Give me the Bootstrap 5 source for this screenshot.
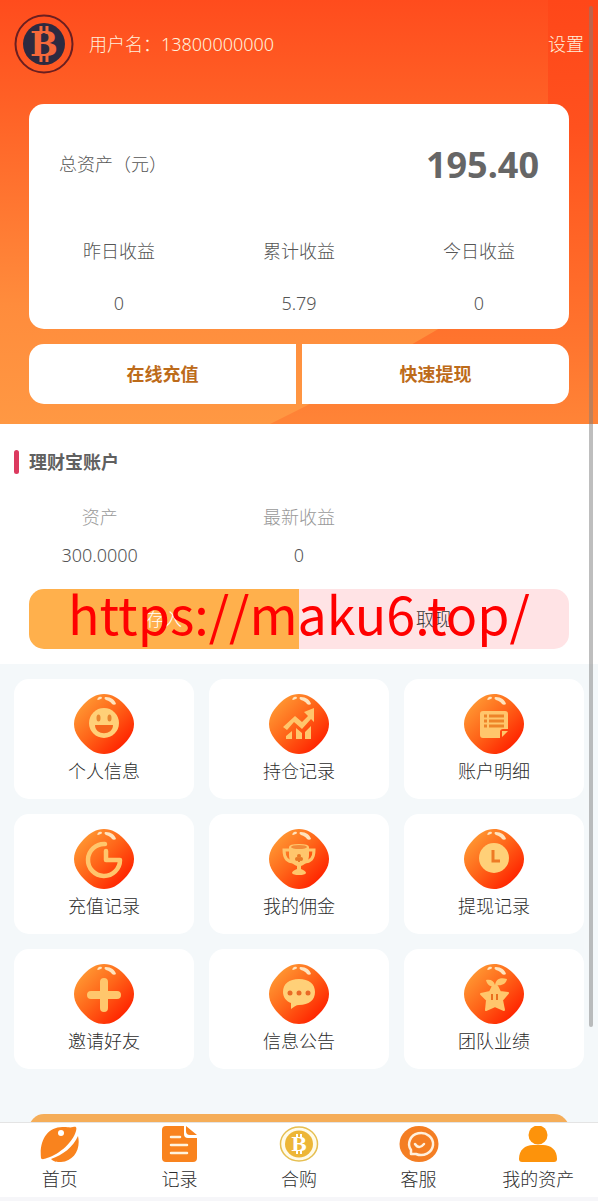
<!DOCTYPE html>
<html lang="zh-CN">
<head>
<meta charset="utf-8">
<meta name="viewport" content="width=device-width, initial-scale=1">
<title>我的资产</title>
<link href="https://cdn.jsdelivr.net/npm/bootstrap@5.3.0/dist/css/bootstrap.min.css" rel="stylesheet">
<style>
  body { font: 300 18px/27px "Noto Sans", "Noto Sans CJK SC", sans-serif; color: #2c2c2c; background: #f4f8fa; }
  a { color: inherit; text-decoration: none; }
  .scroll-area { overflow-y: auto; scrollbar-width: none; min-height: 0; }
  .scroll-area::-webkit-scrollbar { display: none; }
  .scroll-thumb { position: absolute; top: 6px; right: 5px; width: 4px; height: 85%; border-radius: 2px; background: rgba(125, 125, 125, .5); z-index: 5; }
  .hero { position: relative; padding: 14px 29px 20px; background: linear-gradient(#ff4c1d, #ff6126 25%, #ff8c3c 72%, #ff9843); }
  .hero-facets { position: absolute; inset: 0; width: 100%; height: 100%; }
  .profile { margin: 0 -15px 30px; gap: 15px; color: #fff0dc; }
  .avatar { width: 60px; height: 60px; }
  .panel { border-radius: 15px; background: #fff; color: #555; }
  .total-row { height: 121px; padding: 0 30px; }
  .total-sum { font-size: 36px; font-weight: 700; color: #666; }
  .figure-line { line-height: 52px; }
  .pair { gap: 6px; margin-top: 15px; }
  .pair .btn, .transfer .btn { height: 60px; border: 0; border-radius: 0; padding: 0; font-size: 18px; flex: 1 1 0; }
  .pair .btn { background: #fff; color: #bd6b1a; font-weight: 700; }
  .pair .btn:first-child, .transfer .btn-in { border-radius: 15px 0 0 15px; }
  .pair .btn:last-child, .transfer .btn-out { border-radius: 0 15px 15px 0; }
  .account { background: #fff; padding: 26px 0 15px; color: #555; }
  .account-title { font-size: 18px; line-height: 24px; font-weight: 700; margin: 0 14px 24px; gap: 10px; color: #606060; }
  .title-mark { width: 5px; height: 24px; border-radius: 3px; background: #dc3a5f; }
  .account-line { line-height: 38px; }
  .faint { color: #999; }
  .transfer { position: relative; margin: 15px 29px 0; }
  .transfer .btn { font-weight: 300; }
  .btn-in { background: #ffb04c; color: #fff; }
  .btn-out { background: #ffe3e5; color: #333; }
  .watermark { position: absolute; inset: 0; pointer-events: none; color: #f00; font: 400 52px/48px "Noto Sans CJK SC", sans-serif; }
  .tiles { padding: 15px 14px 45px; display: grid; grid-template-columns: repeat(3, 1fr); gap: 15px; }
  .tile { height: 120px; padding-top: 15px; border-radius: 15px; background: #fff; display: flex; flex-direction: column; align-items: center; gap: 4px; }
  .gem { width: 60px; height: 60px; }
  .logout-row { padding: 0 29px 30px; }
  .logout { height: 60px; border: 0; border-radius: 15px; background: #f5ad58; }
  .tabs { background: #fff; border-top: 1px solid #e4e4e4; border-bottom: 4px solid #f6f6f9; padding: 3px 0 4px; z-index: 6; }
  .tab { flex: 1 1 0; display: flex; flex-direction: column; align-items: center; gap: 4px; }
  .tab svg { width: 40px; height: 36px; }
</style>
</head>
<body>
<svg width="0" height="0" class="position-absolute" aria-hidden="true">
  <defs>
    <linearGradient id="gemFill" x1=".1" y1=".1" x2=".85" y2=".85"><stop offset="0" stop-color="#ff9c35"/><stop offset=".5" stop-color="#ff6519"/><stop offset="1" stop-color="#ff2400"/></linearGradient>
    <linearGradient id="facetFill" x1="0" y1="0" x2="0" y2="1"><stop offset="0" stop-color="#ff4719"/><stop offset=".3" stop-color="#ff511e"/><stop offset=".5" stop-color="#ff6024"/><stop offset=".8" stop-color="#ff742e"/><stop offset="1" stop-color="#ff8437"/></linearGradient>
    <symbol id="gem" viewBox="0 0 60 60">
      <path fill="url(#gemFill)" d="M30 0c8 0 14 4 19 9 5 5 11 12 11 21s-6 16-11 21c-5 5-11 9-19 9s-14-4-19-9C6 46 0 39 0 30S6 14 11 9 22 0 30 0z"/>
      <path fill="#ffe3bd" d="M32 3c5 0 9 3 10 7-1 1-3 1-4 0-1-2-3-3-6-4-2-1-2-3 0-3zM24 4c2-2 4-1 4 0s-2 1-4 2c-1 0-1-1 0-2z"/>
    </symbol>
  </defs>
</svg>

<div class="vh-100 d-flex flex-column position-relative overflow-hidden">
  <main class="scroll-area flex-fill">
    <section class="hero">
      <svg class="hero-facets" viewBox="0 0 598 424" preserveAspectRatio="none" aria-hidden="true"><path fill="url(#facetFill)" d="M548 0h50v424H270l36-18 134-78 108-224z"/></svg>
      <header class="profile d-flex align-items-center position-relative">
        <svg class="avatar" viewBox="0 0 60 60" role="img" aria-label="头像">
          <circle cx="30" cy="30" r="28.5" fill="none" stroke="#6b1f20" stroke-width="2"/>
          <circle cx="30" cy="30" r="21" fill="#2d2a40"/>
          <path d="M27 12v8m6-8v8m-6 20v8m6-8v8" stroke="#f5683a" stroke-width="3"/>
          <text x="30" y="42" text-anchor="middle" font-family="DejaVu Serif" font-weight="700" font-size="33" fill="#f5683a">B</text>
        </svg>
        <span>用户名：13800000000</span>
        <a href="#settings" class="ms-auto">设置</a>
      </header>
      <div class="panel position-relative">
        <div class="total-row d-flex align-items-center justify-content-between">
          <span>总资产（元）</span><span class="total-sum">195.40</span>
        </div>
        <div class="row g-0 text-center">
          <div class="col-4"><div class="figure-line">昨日收益</div><div class="figure-line">0</div></div>
          <div class="col-4"><div class="figure-line">累计收益</div><div class="figure-line">5.79</div></div>
          <div class="col-4"><div class="figure-line">今日收益</div><div class="figure-line">0</div></div>
        </div>
      </div>
      <div class="pair d-flex position-relative">
        <button type="button" class="btn">在线充值</button>
        <button type="button" class="btn">快速提现</button>
      </div>
    </section>

    <section class="account">
      <h2 class="account-title d-flex"><span class="title-mark"></span>理财宝账户</h2>
      <div class="row g-0 text-center">
        <div class="col-4"><div class="account-line faint">资产</div><div class="account-line">300.0000</div></div>
        <div class="col-4"><div class="account-line faint">最新收益</div><div class="account-line">0</div></div>
      </div>
      <div class="transfer d-flex">
        <button type="button" class="btn btn-in">存入</button>
        <button type="button" class="btn btn-out">取现</button>
        <div class="watermark d-flex justify-content-center">https://maku6.top/</div>
      </div>
    </section>

    <nav class="tiles" aria-label="功能">
      <a class="tile" href="#profile"><svg class="gem" viewBox="0 0 60 60" aria-hidden="true"><use href="#gem"/>
        <circle cx="30" cy="29" r="15" fill="#ffd078"/><ellipse cx="24.500" cy="24" rx="2" ry="3.500" fill="#e9862f"/><ellipse cx="35.500" cy="24" rx="2" ry="3.500" fill="#e9862f"/><path d="M21 31h18c0 11-18 11-18 0z" fill="#f5651b"/></svg>个人信息</a>
      <a class="tile" href="#positions"><svg class="gem" viewBox="0 0 60 60" aria-hidden="true"><use href="#gem"/>
        <g fill="#ffc66c"><path d="M14 33l12-11 7 6 6-6-4-4 10-4v14l-3-3-9 10-8-7-7 8z"/><path d="M17 45v-3l6-5v8zM27 34l6 5v6h-6zM36 38l6-6v13h-6z"/></g></svg>持仓记录</a>
      <a class="tile" href="#details"><svg class="gem" viewBox="0 0 60 60" aria-hidden="true"><use href="#gem"/>
        <path fill="#ffc66c" d="M19 17h22q3 0 3 3v15h-5q-3 0-3 3v6H19q-3 0-3-3V20q0-3 3-3zM38 43v-6h6z"/><path stroke="#ee8429" stroke-width="3" d="M20 22h3m2 0h15M20 27h3m2 0h15M20 32h3m2 0h15"/></svg>账户明细</a>
      <a class="tile" href="#recharges"><svg class="gem" viewBox="0 0 60 60" aria-hidden="true"><use href="#gem"/>
        <path d="M31 15a16 16 0 1 0 15 16H32V22" fill="none" stroke="#ffc66c" stroke-width="4.500" stroke-linejoin="round" stroke-linecap="round"/></svg>充值记录</a>
      <a class="tile" href="#commission"><svg class="gem" viewBox="0 0 60 60" aria-hidden="true"><use href="#gem"/>
        <path d="M20 21h-5q0 12 10 12M40 21h5q0 12-10 12" fill="none" stroke="#ffc66c" stroke-width="3"/><path fill="#ffc66c" d="M20 18q0-3 10-3t10 3v8c0 6-3 9-8 11v3q5 2 5 4-1 2-7 2t-7-2q0-2 5-4v-3c-5-2-8-5-8-11z"/><ellipse cx="30" cy="18" rx="8" ry="2" fill="#f38a38"/><g fill="#e87925"><circle cx="30" cy="27" r="2"/><circle cx="28" cy="30" r="2"/><circle cx="32" cy="30" r="2"/><path d="M29 29h2v4h-2z"/></g></svg>我的佣金</a>
      <a class="tile" href="#withdrawals"><svg class="gem" viewBox="0 0 60 60" aria-hidden="true"><use href="#gem"/>
        <circle cx="30" cy="29" r="15" fill="#ffd078"/><path d="M29 21v11h7" fill="none" stroke="#ee7a25" stroke-width="3"/></svg>提现记录</a>
      <a class="tile" href="#invite"><svg class="gem" viewBox="0 0 60 60" aria-hidden="true"><use href="#gem"/>
        <path d="M30 18v26M17 31h26" stroke="#ffc66c" stroke-width="8" stroke-linecap="round"/></svg>邀请好友</a>
      <a class="tile" href="#notices"><svg class="gem" viewBox="0 0 60 60" aria-hidden="true"><use href="#gem"/>
        <path fill="#ffd078" d="M30 15c10 0 16 5 16 13s-6 13-16 13c-3 0-5 2-8 4v-6c-5-2-8-6-8-11 0-8 6-13 16-13z"/><g fill="#e96a25"><circle cx="21" cy="29" r="2.500"/><circle cx="30" cy="29" r="2.500"/><circle cx="39" cy="29" r="2.500"/></g></svg>信息公告</a>
      <a class="tile" href="#team"><svg class="gem" viewBox="0 0 60 60" aria-hidden="true"><use href="#gem"/>
        <path fill="#ffc66c" stroke="#ffc66c" stroke-width="2" stroke-linejoin="round" d="M29 22h4l3 6 8 1-6 7 2 10-9-4-9 4 1-10-6-6 9-2z"/><path fill="#ffc66c" d="M31 23c-4 0-8-2-9-7 5-1 8 1 9 5 1-5 4-8 12-6-1 5-5 7-11 6z"/><path d="M28 30v6m5-6v6" stroke="#e9701f" stroke-width="2"/></svg>团队业绩</a>
    </nav>
    <div class="logout-row"><button type="button" class="logout w-100" aria-label="退出登录"></button></div>
  </main>

  <nav class="tabs d-flex flex-shrink-0" aria-label="主导航">
    <a class="tab" href="#home"><svg viewBox="0 0 40 36" aria-hidden="true"><path fill="#f9831e" d="M1 32C-1 14 8 0 24 1c4 0 6 1 9 0 3-1 4 0 3 4C33 16 20 28 7 32c-3 1-5 2-6 0z"/><path fill="#f9831e" d="M38 10c3 13-4 25-17 26-4 0-7 0-10-3 12-4 22-12 27-23z"/><circle cx="21" cy="7" r="3" fill="#fff"/></svg>首页</a>
    <a class="tab" href="#records"><svg viewBox="0 0 40 36" aria-hidden="true"><path fill="#f9831e" d="M7 0h18v8q0 4 4 4h9v20q0 4-4 4H7q-4 0-4-4V4q0-4 4-4zM27 0l11 9h-7q-4 0-4-4z"/><path d="M12 11h9M12 19h16M12 27h16" stroke="#fff3de" stroke-width="2.500" stroke-linecap="round"/></svg>记录</a>
    <a class="tab" href="#group"><svg viewBox="0 0 40 36" aria-hidden="true"><ellipse cx="20" cy="18" rx="18.500" ry="17" fill="#fffbe9" stroke="#e6bf51" stroke-width="1.500"/><ellipse cx="20" cy="18" rx="14" ry="13.500" fill="#edb637"/><path d="M18 8v4m4-4v4m-4 12v4m4-4v4" stroke="#fff" stroke-width="2"/><text x="20" y="25" text-anchor="middle" font-family="DejaVu Serif" font-weight="700" font-size="19" fill="#fff">B</text></svg>合购</a>
    <a class="tab" href="#service"><svg viewBox="0 0 40 36" aria-hidden="true"><ellipse cx="20" cy="18" rx="19.500" ry="18" fill="#f47e23"/><path d="M12 28v-4a12 11 0 1 1 5 4z" fill="none" stroke="#fff0dc" stroke-width="2.500" stroke-linejoin="round"/><path d="M16 18q4 6 9 0" fill="none" stroke="#fff0dc" stroke-width="2.500" stroke-linecap="round"/></svg>客服</a>
    <a class="tab" href="#assets"><svg viewBox="0 0 40 36" aria-hidden="true"><circle cx="20" cy="9" r="9.500" fill="#fd930b"/><path fill="#fd930b" d="M1 33c0-9 6-14 14-14h10c8 0 14 5 14 14q0 3-3 3H4q-3 0-3-3z"/></svg>我的资产</a>
  </nav>
  <div class="scroll-thumb" aria-hidden="true"></div>
</div>
<script src="https://cdn.jsdelivr.net/npm/bootstrap@5.3.0/dist/js/bootstrap.bundle.min.js"></script>
</body>
</html>
